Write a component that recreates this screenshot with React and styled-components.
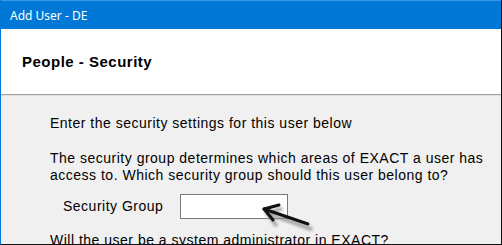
import React from 'react';
import styled, { createGlobalStyle } from 'styled-components';

const GlobalStyle = createGlobalStyle`
  html, body { margin: 0; padding: 0; background: #fff; }
`;

const Window = styled.div`
  position: relative;
  width: 502px;
  height: 245px;
  box-sizing: border-box;
  display: flex;
  flex-direction: column;
  overflow: hidden;
  background: #f0f0f0;
  border-left: 1px solid #0078d7;
  border-right: 1px solid #111;
  border-bottom: 1px solid #111;
`;

const TitleBar = styled.div`
  height: 29px;
  flex: none;
  box-sizing: border-box;
  display: flex;
  align-items: center;
  padding-left: 9px;
  background: #0078d7;
  border-top: 1px solid #3c97e0;
  color: #fff;
  font-family: "Noto Sans", "Open Sans", sans-serif;
  font-size: 12px;
`;

const Header = styled.div`
  height: 66px;
  flex: none;
  box-sizing: border-box;
  display: flex;
  align-items: center;
  padding-left: 21px;
  background: #fff;
  border-bottom: 1px solid #a0a0a0;
  box-shadow: 0 1px 0 #e2e2e2;
  color: #000;
  font-family: "Liberation Sans", Arial, sans-serif;
  font-weight: bold;
  font-size: 15px;
  letter-spacing: 0.5px;
`;

const Body = styled.div`
  padding: 20px 0 0 49px;
  font-family: "Liberation Sans", Arial, sans-serif;
  font-size: 14px;
  line-height: 17px;
  letter-spacing: 0.5px;
  white-space: nowrap;
  color: #000;
`;

const Para = styled.p`
  margin: 0 0 ${p => p.$gap || 0}px;
`;

const FieldRow = styled.div`
  display: flex;
  align-items: center;
  height: 25px;
  margin: 0 0 13px 13px;
`;

const Label = styled.span`
  width: 117px;
`;

const TextBox = styled.div`
  width: 108px;
  height: 25px;
  box-sizing: border-box;
  background: #fff;
  border: 1px solid #7a7a7a;
`;

const Arrow = styled.svg`
  position: absolute;
  left: 250px;
  top: 196px;
  overflow: visible;
`;

export default function App() {
  return (
    <>
      <GlobalStyle />
      <Window>
        <TitleBar>Add User - DE</TitleBar>
        <Header>People - Security</Header>
        <Body>
          <Para $gap={18}>Enter the security settings for this user below</Para>
          <Para $gap={10}>
            The security group determines which areas of EXACT a user has
            <br />
            access to. Which security group should this user belong to?
          </Para>
          <FieldRow>
            <Label>Security Group</Label>
            <TextBox />
          </FieldRow>
          <Para>Will the user be a system administrator in EXACT?</Para>
        </Body>
        <Arrow width="70" height="40" viewBox="0 0 70 40">
          <defs>
            <filter id="sh" x="-50%" y="-50%" width="200%" height="200%">
              <feGaussianBlur stdDeviation="1.6" />
            </filter>
          </defs>
          <g stroke="#8a8a8a" strokeWidth="3.5" fill="none" strokeLinecap="round" filter="url(#sh)" opacity="0.8">
            <path d="M16 17 L60 33" />
            <path d="M30 13 L16 17 L25 29" />
          </g>
          <g stroke="#111" strokeWidth="3" fill="none" strokeLinecap="round" strokeLinejoin="round">
            <path d="M13 13 L57 28" />
            <path d="M28 9 L13 13 L22 24" />
          </g>
        </Arrow>
      </Window>
    </>
  );
}
